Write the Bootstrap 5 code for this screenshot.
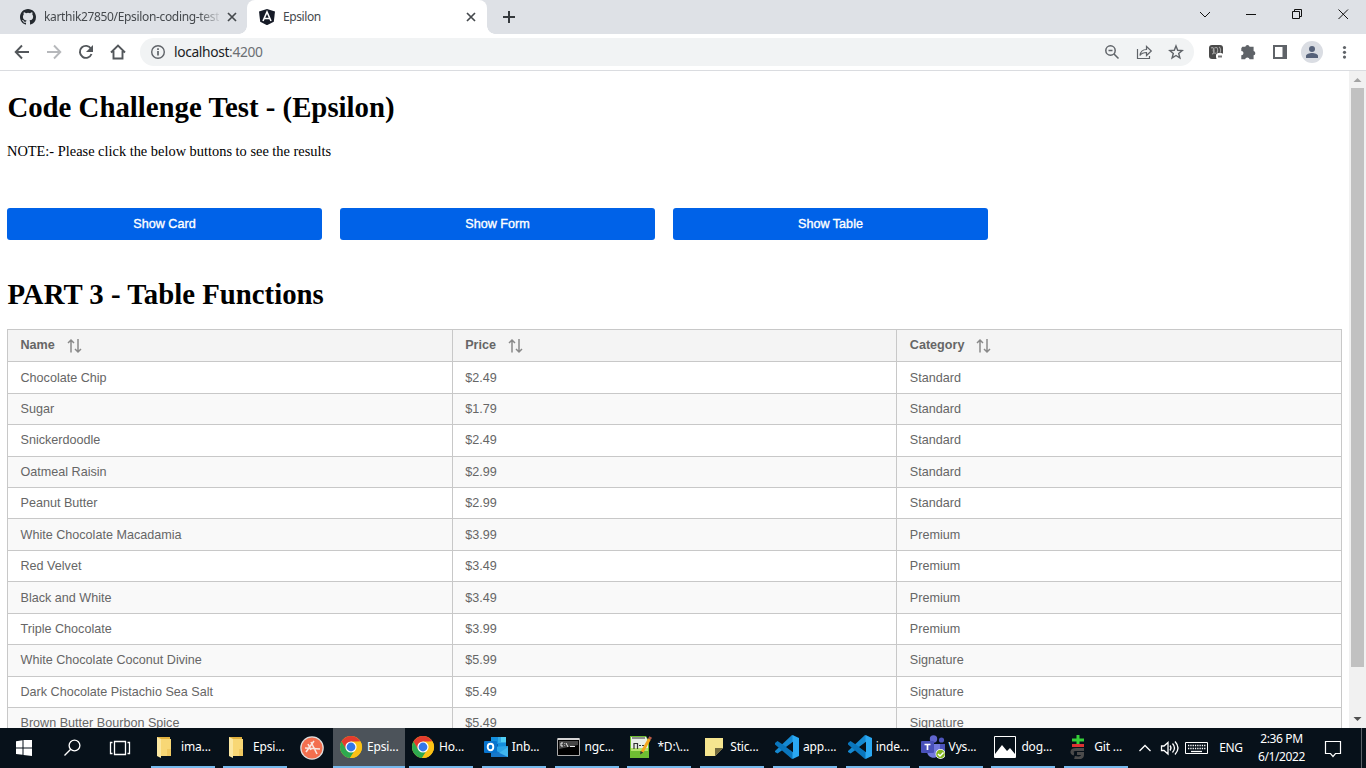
<!DOCTYPE html>
<html lang="en">
<head>
<meta charset="utf-8">
<meta name="viewport" content="width=device-width, initial-scale=1">
<title>Epsilon</title>
<link href="https://cdn.jsdelivr.net/npm/bootstrap@5.3.0/dist/css/bootstrap.min.css" rel="stylesheet">
<style>
  body { width: 1366px; height: 768px; overflow: hidden; font-family: "Noto Sans", "Open Sans", sans-serif; }
  svg { display: block; flex: none; }

  /* browser frame */
  .tabstrip { height: 34px; background: #dee1e6; }
  .tab-item { height: 34px; font-size: 12px; color: #45494d; }
  .tab-back { width: 247px; padding-left: 20px; }
  .tab-front { width: 240px; padding-left: 12px; background: #fff; border-radius: 8px 8px 0 0; position: relative; }
  .tab-front::before, .tab-front::after { content: ""; position: absolute; bottom: 0; width: 8px; height: 8px; }
  .tab-front::before { left: -8px; background: radial-gradient(circle at 0 0, #dee1e6 7.5px, #fff 8px); }
  .tab-front::after { right: -8px; background: radial-gradient(circle at 100% 0, #dee1e6 7.5px, #fff 8px); }
  .tab-title { width: 175px; white-space: nowrap; letter-spacing: -.4px; }
  .tab-back .tab-title { letter-spacing: -.34px; }
  .tab-fade { -webkit-mask-image: linear-gradient(90deg, #000 155px, transparent 178px); mask-image: linear-gradient(90deg, #000 155px, transparent 178px); }
  .toolbar { height: 37px; border-bottom: 1px solid #dadce0; }
  .omnibox { width: 1054px; height: 28px; border-radius: 14px; background: #f1f3f4; padding-left: 10px; font-size: 13.8px; color: #202124; letter-spacing: -.36px; }
  .omnibox span span { color: #6b6f73; }
  .avatar { width: 22px; height: 22px; background: #dadde3; }

  /* page */
  .viewport { height: 657px; overflow: hidden; }
  .page-body { width: 1349px; padding: 18px 7px 0 7px; }
  .page-body h1 { font: bold 28.8px/36px "Liberation Serif", serif; color: #000; margin: 0; padding-left: .4px; }
  .page-body .part-title { margin-top: 36px; }
  .note { font: 14.4px/18px "Liberation Serif", serif; color: #000; margin: 17px 0 48px; }
  .btn-row { gap: 18px; }
  .btn-show { width: 315px; height: 32px; padding: 0; border: 0; border-radius: 3px; background: #0062e8; color: #fff; font: 12.6px/31px "Liberation Sans", sans-serif; -webkit-text-stroke: .35px #fff; }
  .cookie-table { width: 1335px; table-layout: fixed; margin: 17px 0 0; border: 1px solid #c8c8c8; border-collapse: collapse; font: 12.6px/15px "Liberation Sans", sans-serif; }
  .cookie-table > :not(caption) > * > * { height: 31px; padding: 8px 12px 0 12.5px; vertical-align: top; color: #666; border: 1px solid #c8c8c8; box-shadow: none; background: #fff; }
  .cookie-table > tbody > tr:nth-child(even) > td { background: #f9f9f9; }
  .cookie-table > thead > tr > th { height: 32px; background: #f4f4f4; font-weight: bold; }
  .cookie-table > tbody > tr.tall > td { height: 32px; }
  .cookie-table > tbody > tr.low > td { padding-top: 9px; }
  .sort-mark { margin: 0 0 -1px 11px; }
  .scroller { width: 17px; background: #f1f1f1; }
  .thumb { width: 13px; height: 579px; background: #c1c1c1; }

  /* taskbar */
  .taskbar { height: 40px; background: #07111a; color: #fff; font-size: 12px; }
  .task { width: 64px; height: 40px; padding-left: 2px; border-bottom: 2px solid #76b9ed; margin-right: 8.8px; flex: none; }
  .task.folder-one { margin-right: 8px; }
  .task.folder-two { margin-right: 9px; }
  .task.current { width: 72px; padding-left: 6px; background: #4c535a; margin-right: 4px; }
  .task span { white-space: nowrap; margin-left: 4px; letter-spacing: -.15px; }
  .clock { width: 60px; line-height: 18px; letter-spacing: -.4px; }
  .lang { margin: 0 10px 0 7px; letter-spacing: -.3px; }
  .notice { margin: 2px 19px 0 14px; }
  .peek { width: 5px; height: 40px; border-left: 1px solid #5b6168; }
</style>
</head>
<body class="bg-white d-flex flex-column">

<svg width="0" height="0" class="position-absolute">
  <defs>
    <symbol id="folder" viewBox="0 0 24 24"><path fill="#e2b23f" d="M4 2h13v19H9L4 19z"/><path fill="#f8d775" d="M8 4h10v17H8z"/><path fill="#fbe7a1" d="M4 2l4 2v19l-4-2z"/><path fill="#d79e27" d="M14 14h4v7h-4z" opacity=".25"/></symbol>
    <symbol id="chrome" viewBox="0 0 24 24"><circle cx="12" cy="12" r="11" fill="#fbc116"/><path fill="#e33b2e" d="M2.5 6.5a11 11 0 0 1 19 0H12L7 15z"/><path fill="#2da94f" d="M2.5 6.5A11 11 0 0 0 11 23l5.5-8.5H7.2z"/><path fill="#fbc116" d="M21.5 6.5A11 11 0 0 1 11 23l5.8-9L17 7z"/><circle cx="12" cy="12" r="5.6" fill="#fff"/><circle cx="12" cy="12" r="4.4" fill="#3377e8"/></symbol>
    <symbol id="code" viewBox="0 0 24 24"><path fill="#1589d1" d="M0 16L17 0l2 1v6L2.500 18.500 0 17z"/><path fill="#0a76bd" d="M0 8l2.500-2L19 17v6l-2 1L0 9.500z"/><path fill="#2aa8f2" d="M17.500 0L24 3v18l-6.500 3z"/><path fill="#07111a" d="M18 6.800v10.400L11 12z"/></symbol>
    <symbol id="sort" viewBox="0 0 16 16"><path fill="none" stroke="#898989" stroke-width="1.500" d="M5 14.500V2.500M2 5l3-3 3 3M12 1v12.500M9 11l3 3 3-3"/></symbol>
  </defs>
</svg>

<header>
  <div class="tabstrip d-flex">
    <div class="tab-item tab-back d-flex align-items-center">
      <svg width="16" height="16" viewBox="0 0 16 16"><path fill="#24292f" d="M8 0C3.580 0 0 3.580 0 8c0 3.540 2.290 6.530 5.470 7.590.4.070.55-.17.55-.38v-1.490c-2.010.37-2.530-.49-2.690-.94-.09-.23-.48-.94-.82-1.130-.28-.15-.68-.52-.01-.53.63-.01 1.080.58 1.230.82.72 1.210 1.870.87 2.330.66.07-.52.28-.87.51-1.070-1.780-.2-3.640-.89-3.640-3.950 0-.87.31-1.590.82-2.150-.08-.2-.36-1.020.08-2.120 0 0 .67-.21 2.200.82a7.600 7.600 0 0 1 4 0c1.530-1.040 2.200-.82 2.200-.82.44 1.100.16 1.920.08 2.120.51.56.82 1.270.82 2.150 0 3.070-1.870 3.750-3.650 3.950.29.25.54.73.54 1.480v2.200c0 .21.15.46.55.38A8 8 0 0 0 16 8c0-4.420-3.580-8-8-8z"/></svg>
      <div class="tab-title tab-fade ms-2">karthik27850/Epsilon-coding-test</div>
      <svg class="ms-2" width="10" height="10" viewBox="0 0 10 10"><path stroke="#45494d" stroke-width="1.700" d="M1 1l8 8M9 1L1 9"/></svg>
    </div>
    <div class="tab-item tab-front d-flex align-items-center">
      <svg width="16" height="16" viewBox="0 0 16 16"><path fill="#161b27" d="M8 0l8 2.600-1.200 10.200L8 16.200l-6.800-3.400L0 2.600z"/><path fill="none" stroke="#fff" stroke-width="1.600" d="M4 12L8 3l4 9M5.500 9.500h5"/></svg>
      <div class="tab-title ms-2">Epsilon</div>
      <svg class="ms-2" width="10" height="10" viewBox="0 0 10 10"><path stroke="#45494d" stroke-width="1.700" d="M1 1l8 8M9 1L1 9"/></svg>
    </div>
    <svg class="mt-2 ms-3" width="12" height="18" viewBox="0 0 12 18"><path stroke="#35393d" stroke-width="2" d="M0 9h12M6 3v12"/></svg>
    <svg class="ms-auto" width="166" height="30" viewBox="0 0 166 30" fill="none" stroke="#111" stroke-width="1"><path d="M0 12l5 5 5-5M46 14.500h10M92.500 11.500h7v7h-7zM94.500 11V9.500h7v7H100M138.500 9.500l9.500 9.500M148 9.500l-9.500 9.500"/></svg>
  </div>
  <div class="toolbar d-flex align-items-center">
    <svg width="140" height="36" viewBox="0 0 140 36" fill="none" stroke="#53575b" stroke-width="1.900">
      <path d="M29 18H16M22 11.500L15.700 18l6.300 6.500"/>
      <path stroke="#b6b8bb" d="M47 18h13M54 11.500l6.300 6.500-6.300 6.500"/>
      <path d="M91 14.700A6 6 0 1 0 91.500 20"/><path fill="#53575b" stroke="none" d="M93 11v7h-7z"/>
      <path d="M111 18.500l7-7 7 7M113.500 17v7.500h9V17"/>
    </svg>
    <div class="omnibox d-flex align-items-center">
      <svg width="16" height="16" viewBox="0 0 16 16"><circle cx="8" cy="8" r="6.300" fill="none" stroke="#5f6368" stroke-width="1.400"/><path stroke="#5f6368" stroke-width="1.700" d="M8 7v4.500M8 4.300V6"/></svg>
      <span class="ms-2">localhost<span>:4200</span></span>
      <svg class="ms-auto" width="96" height="28" viewBox="0 0 96 28" fill="none" stroke="#5f6368" stroke-width="1.500">
        <circle cx="12.500" cy="12.500" r="4.700"/><path d="M16 16l4.500 4.500M10.500 12.500h4"/>
        <path stroke-width="1.200" d="M39.500 11v9.500h12V18M42 17.500c.5-4 3-6 6.500-6V8.500l4.800 4.500-4.800 4.500v-3c-3 0-5 .8-6.500 3z"/>
        <path stroke-width="1.400" d="M78 8l1.700 4.300 4.500.3-3.500 2.900 1.200 4.500-3.900-2.500-3.900 2.500 1.200-4.500-3.500-2.900 4.500-.3z"/>
      </svg>
    </div>
    <svg width="107" height="36" viewBox="0 0 107 36">
      <rect x="15" y="11" width="14" height="14" rx="3" fill="#4a4a4a"/><path fill="none" stroke="#a5a5a5" stroke-width="1.100" d="M17 14c4-2 4 6 1 6M20.500 14c3-2 4 2 2.500 5M20 14c-2 3 0 6 2 5M25 13c2 1 2 4 1 6"/><rect x="22" y="19" width="7.500" height="6.500" rx="2.500" fill="#fff"/><path fill="#777" d="M24 21.500h4v2h-4z"/>
      <path transform="translate(.8 0)" fill="#5f6368" d="M47.500 12.800h3a2.200 2.200 0 0 1 4.300 0h4v4.200a2.200 2.200 0 0 1 0 4.300v4h-4a2.300 2.300 0 0 0-4.500 0h-3.800v-4a2.200 2.200 0 0 0 0-4.400v-2.600z"/>
      <path fill="#5f6368" d="M79 11h14v14H79z"/><path fill="#fff" d="M81 13h7.500v10H81z"/>
    </svg>
    <div class="avatar rounded-circle d-flex align-items-center justify-content-center"><svg width="14" height="14" viewBox="0 0 14 14" fill="#56627a"><circle cx="7" cy="4" r="3"/><path d="M1 13v-2c0-2 3.500-3 6-3s6 1 6 3v2z"/></svg></div>
    <svg class="ms-auto me-3" width="10" height="16" viewBox="0 0 10 16" fill="#5f6368"><circle cx="4.500" cy="3.500" r="1.600"/><circle cx="4.500" cy="8.300" r="1.600"/><circle cx="4.500" cy="13.100" r="1.600"/></svg>
  </div>
</header>

<div class="viewport d-flex">
  <main class="page-body">
    <h1>Code Challenge Test - (Epsilon)</h1>
    <p class="note">NOTE:- Please click the below buttons to see the results</p>
    <div class="btn-row d-flex">
      <button class="btn btn-show">Show Card</button>
      <button class="btn btn-show">Show Form</button>
      <button class="btn btn-show">Show Table</button>
    </div>
    <h1 class="part-title">PART 3 - Table Functions</h1>
    <table class="table cookie-table">
      <thead><tr>
        <th><div class="d-flex align-items-start">Name<svg class="sort-mark" width="16" height="16"><use href="#sort"/></svg></div></th>
        <th><div class="d-flex align-items-start">Price<svg class="sort-mark" width="16" height="16"><use href="#sort"/></svg></div></th>
        <th><div class="d-flex align-items-start">Category<svg class="sort-mark" width="16" height="16"><use href="#sort"/></svg></div></th>
      </tr></thead>
      <tbody>
        <tr class="tall low"><td>Chocolate Chip</td><td>$2.49</td><td>Standard</td></tr>
        <tr><td>Sugar</td><td>$1.79</td><td>Standard</td></tr>
        <tr class="tall"><td>Snickerdoodle</td><td>$2.49</td><td>Standard</td></tr>
        <tr><td>Oatmeal Raisin</td><td>$2.99</td><td>Standard</td></tr>
        <tr><td>Peanut Butter</td><td>$2.99</td><td>Standard</td></tr>
        <tr class="tall low"><td>White Chocolate Macadamia</td><td>$3.99</td><td>Premium</td></tr>
        <tr><td>Red Velvet</td><td>$3.49</td><td>Premium</td></tr>
        <tr class="tall low"><td>Black and White</td><td>$3.49</td><td>Premium</td></tr>
        <tr><td>Triple Chocolate</td><td>$3.99</td><td>Premium</td></tr>
        <tr class="tall"><td>White Chocolate Coconut Divine</td><td>$5.99</td><td>Signature</td></tr>
        <tr><td>Dark Chocolate Pistachio Sea Salt</td><td>$5.49</td><td>Signature</td></tr>
        <tr><td>Brown Butter Bourbon Spice</td><td>$5.49</td><td>Signature</td></tr>
      </tbody>
    </table>
  </main>
  <aside class="scroller d-flex flex-column align-items-center justify-content-between">
    <svg width="17" height="17" viewBox="0 0 17 17"><path fill="#a3a3a3" d="M4.500 11L8.500 7l4 4z"/></svg>
    <div class="thumb mb-auto"></div>
    <svg width="17" height="17" viewBox="0 0 17 17"><path fill="#505050" d="M4.500 6l4 4 4-4z"/></svg>
  </aside>
</div>

<footer class="taskbar d-flex align-items-center">
  <svg width="151" height="40" viewBox="0 0 151 40">
    <path fill="#fff" d="M16 13.200l6.500-.9V19.500H16zM23.500 12.100L32 12v7.500h-8.500zM16 20.500h6.500v6.300l-6.500-.9zM23.500 20.500H32V28l-8.500-1.100z"/>
    <g fill="none" stroke="#fff" stroke-width="1.300"><circle cx="74.500" cy="17.500" r="5.400"/><path d="M70.700 21.300L64.500 27.500"/><path d="M114.500 13.500h11v13h-11zM112.500 14.500h-2v11h2M127.500 14.500h2v11h-2"/></g>
  </svg>
  <div class="task folder-one d-flex align-items-center"><svg width="24" height="24"><use href="#folder"/></svg><span>ima...</span></div>
  <div class="task folder-two d-flex align-items-center"><svg width="24" height="24"><use href="#folder"/></svg><span>Epsi...</span></div>
  <svg width="37" height="40" viewBox="0 0 37 40"><circle cx="16" cy="20" r="11.800" fill="#dedede"/><circle cx="16" cy="20" r="10.500" fill="#f36f4e"/><path fill="none" stroke="#f9e6df" stroke-width="1.600" d="M10 24l8-11M15 14l6 12M9 20l15 1M12 16l3 6"/></svg>
  <div class="task current d-flex align-items-center"><svg width="24" height="24"><use href="#chrome"/></svg><span>Epsi...</span></div>
  <div class="task d-flex align-items-center"><svg width="24" height="24"><use href="#chrome"/></svg><span>Ho...</span></div>
  <div class="task d-flex align-items-center"><svg width="24" height="24" viewBox="0 0 24 24"><path fill="#1490df" d="M7 2h15v13H7z"/><path fill="#32a9e7" d="M14 2h8v6h-8z"/><path fill="#50d0f7" d="M17 2h5v5h-5z"/><path fill="#0a5fae" d="M7 9h7v6H7z"/><path fill="#2ba5e8" d="M7 12l17-1v11H7z"/><path fill="#1777c8" d="M7 13l17 9H7z"/><path fill="#58c8f3" d="M24 12l-9 6 9 4z" opacity=".5"/><rect y="6" width="13" height="12" rx="1" fill="#0874ce"/><ellipse cx="6.500" cy="12" rx="2.800" ry="3.200" fill="none" stroke="#fff" stroke-width="1.900"/></svg><span>Inb...</span></div>
  <div class="task d-flex align-items-center"><svg width="24" height="24" viewBox="0 0 24 24"><path fill="#000" stroke="#aaa" d="M.5 3.500h22v17H.5z"/><path fill="#d5d5d5" d="M1 3h21v2H1z"/><path fill="#464646" d="M2 6h19v4L2 14z"/><path fill="none" stroke="#eee" d="M6 8H4v3h2M7.500 8.500v.5M7.500 10.500v.5M9 8l2 4M13 11.500h5"/></svg><span>ngc...</span></div>
  <div class="task d-flex align-items-center"><svg width="24" height="24" viewBox="0 0 24 24"><path fill="#6fbd32" d="M1 1h16l3 5v17H1z"/><path fill="#e9eee6" d="M2 2h15l2 4v7H2z"/><path fill="#b4e36c" d="M2 13h17v3H2z"/><path stroke="#333" fill="none" d="M5 8v6M5.500 8.500h3V14M10 10.500h2M13 10.500h2M3 3h13" stroke-width="1.200"/><path stroke="#f3a61e" stroke-width="3" d="M20.500 4L13 17"/><path stroke="#bb5b49" stroke-width="3" d="M20.500 4l1.200-2"/><path fill="#333" d="M11.500 16l-.3 3.500 3-2z"/></svg><span>*D:\...</span></div>
  <div class="task d-flex align-items-center"><svg width="24" height="24" viewBox="0 0 24 24"><path fill="#f5e58f" d="M3 3h18v10l-8 8H3z"/><path fill="#71693e" d="M13 13h8l-8 8z"/></svg><span>Stic...</span></div>
  <div class="task d-flex align-items-center"><svg width="24" height="24"><use href="#code"/></svg><span>app....</span></div>
  <div class="task d-flex align-items-center"><svg width="24" height="24"><use href="#code"/></svg><span>inde...</span></div>
  <div class="task d-flex align-items-center"><svg width="24" height="24" viewBox="0 0 24 24"><circle cx="12.500" cy="4" r="3.700" fill="#6065ce"/><circle cx="20.500" cy="5" r="2.600" fill="#4e55bd"/><path fill="#4b53bc" d="M16 9h8v7c0 3-2 5-5 5z"/><path fill="#7279dd" d="M6 9h13v7c0 9-13 9-13 0z"/><rect y="6" width="13" height="12" rx="1" fill="#4850b9"/><path stroke="#fff" stroke-width="1.700" d="M3.500 9.500h6M6.500 9.500V15"/><circle cx="19.500" cy="19" r="5" fill="#fff"/><circle cx="19.500" cy="19" r="4.300" fill="#84b720"/><path fill="none" stroke="#fff" stroke-width="1.500" d="M17 19l2 2 3.500-3.500"/></svg><span>Vys...</span></div>
  <div class="task d-flex align-items-center"><svg width="24" height="24" viewBox="0 0 24 24"><path fill="#07111a" stroke="#fff" d="M1.500 1.500h21v21h-21z"/><path fill="#fff" d="M2 19l7-9 5 6 3-3 5 6v3H2z"/></svg><span>dog...</span></div>
  <div class="task me-0 d-flex align-items-center"><svg width="24" height="24" viewBox="0 0 24 24"><path stroke="#35cf38" stroke-width="3" d="M6 5h12M12 0v9"/><path stroke="#df3232" stroke-width="3" d="M6 10.500h12"/><path fill="none" stroke="#4b4b4b" stroke-width="3" d="M18 14.500H10c-5 0-5 4-2 4.500M11 18.500h5.500V20c0 3-4 3.500-8 2.500"/></svg><span>Git ...</span></div>
  <svg class="ms-auto" width="84" height="40" viewBox="0 0 84 40" fill="none" stroke="#fff" stroke-width="1.300">
    <path d="M11.500 23l5.500-5.500 5.500 5.500M33.500 18v4.500H36l4 3.500V14.500L36 18zM42 17.500q2 2.500 0 5M44.500 15.500q4 4.500 0 9M47 13.500q6 6.500 0 13"/>
    <path stroke-width="1" d="M57.500 14.500h22v11h-22z"/><path stroke-dasharray="1.300 1" d="M60 17.500h18M60 20.500h18"/><path d="M63 23.500h11"/>
  </svg>
  <span class="lang">ENG</span>
  <div class="clock text-center">2:36 PM<br>6/1/2022</div>
  <svg class="notice" width="18" height="18" viewBox="0 0 18 18"><path fill="none" stroke="#fff" stroke-width="1.200" d="M1.500 1.500h15v12h-5l-2.500 3-2.500-3h-5z"/></svg>
  <div class="peek"></div>
</footer>

<script src="https://cdn.jsdelivr.net/npm/bootstrap@5.3.0/dist/js/bootstrap.bundle.min.js"></script>
</body>
</html>
